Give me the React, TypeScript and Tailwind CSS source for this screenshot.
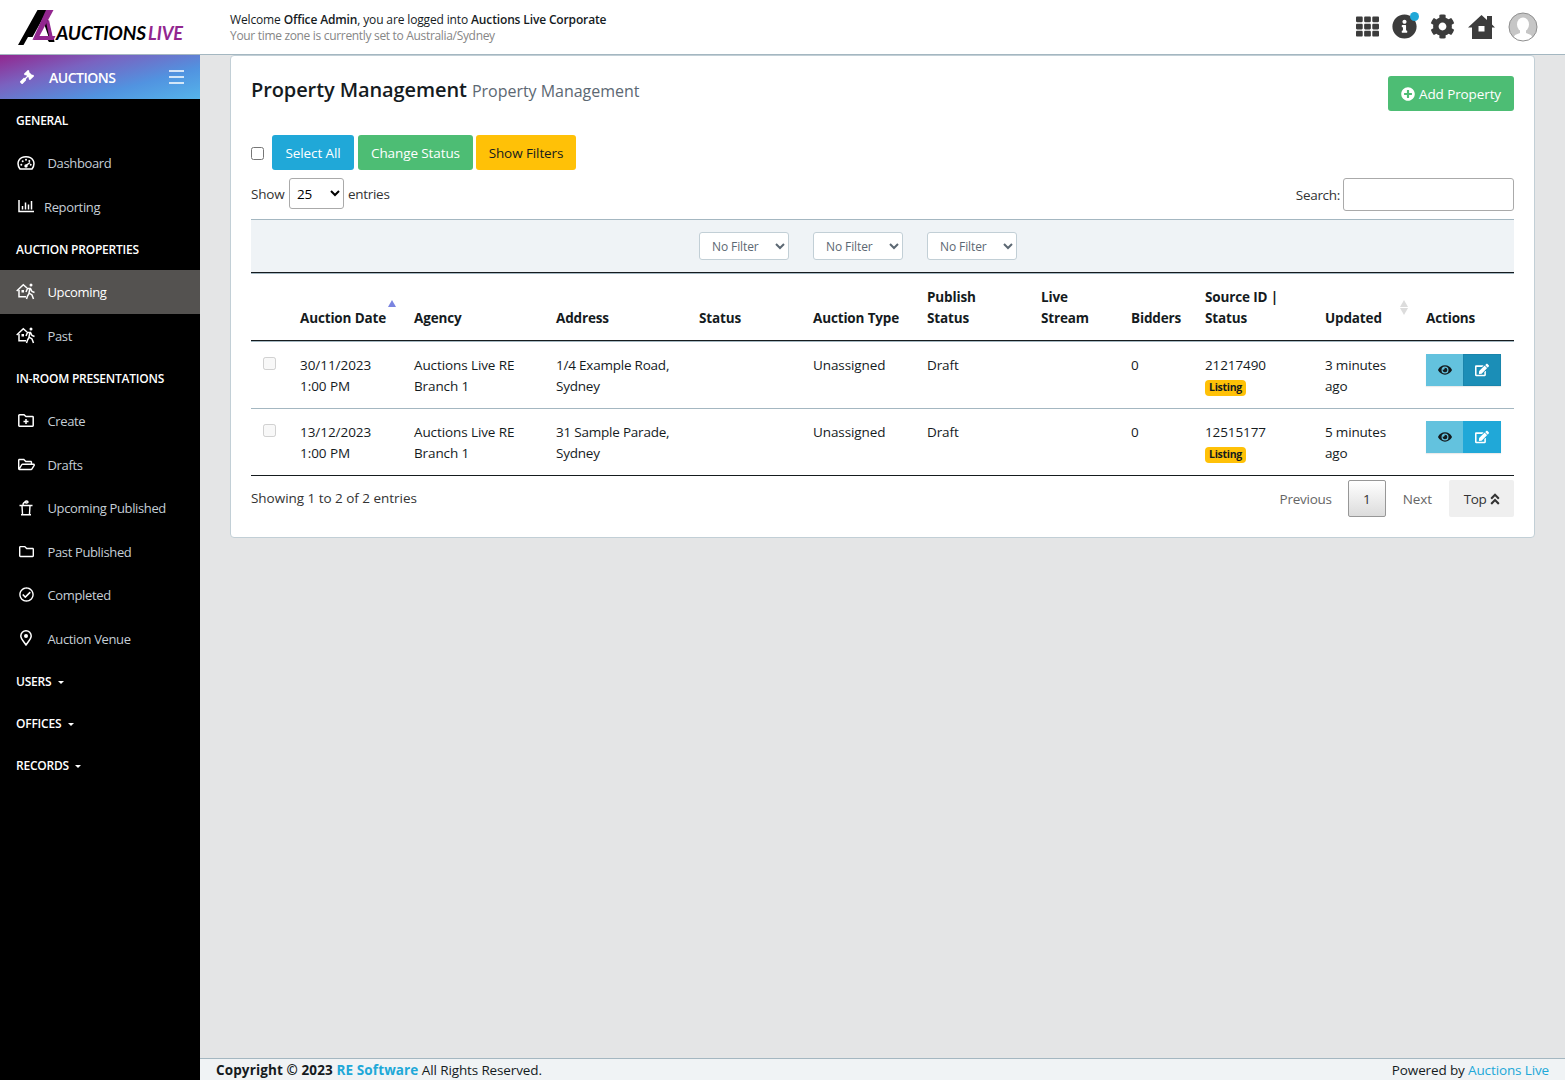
import React from 'react';
import { FaAngleDoubleUp, FaCog, FaEdit, FaEye, FaGavel, FaInfoCircle, FaPlusCircle, FaRegCheckCircle, FaRegFolder, FaRegFolderOpen, FaTh } from 'react-icons/fa';

interface Property {
    date: string;
    time: string;
    address: string;
    sourceId: string;
    updated: string;
    active: boolean;
}

const properties: Property[] = [
    { date: '30/11/2023', time: '1:00 PM', address: '1/4 Example Road,', sourceId: '21217490', updated: '3 minutes', active: true },
    { date: '13/12/2023', time: '1:00 PM', address: '31 Sample Parade,', sourceId: '12515177', updated: '5 minutes', active: false },
];

const columnWidths = [37, 114, 142, 143, 114, 114, 114, 90, 74, 120, 101, 100];

const Logo = () => (
    <svg width="168" height="38" viewBox="0 0 168 38" className="block">
        <path d="M0 37 L19.500 2 H29.500 L14.500 29 H10 L5.500 37 Z" fill="#000" />
        <path d="M29.500 10 L34.500 30 H31 L26.500 17 Z M29 31 H36 L36.500 34 H31 Z" fill="#000" />
        <path d="M28 2 H35.500 L21.500 28 L14.500 32 Z" fill="#92278f" />
        <path d="M20 28 H37.500 L35.500 32 H14.500 Z M28 14 L31 12 L34.500 28 H31 Z" fill="#92278f" />
        <text x="38" y="31.500" fontFamily="Lato" fontStyle="italic" fontWeight="700" fontSize="18" textLength="90" lengthAdjust="spacingAndGlyphs" fill="#000">
            AUCTIONS
        </text>
        <text x="130" y="31.500" fontFamily="Lato" fontStyle="italic" fontWeight="700" fontSize="18" textLength="35" lengthAdjust="spacingAndGlyphs" fill="#92278f">
            LIVE
        </text>
    </svg>
);

const HouseIcon = () => (
    <svg width="27" height="26" viewBox="0 0 27 26" fill="#3c3c3c">
        <path fillRule="evenodd" d="M13.500 1 L19 6 V2 H24 V10.500 L27 13.500 H24 V25 H4 V13.500 H0 Z M10.500 12 V17.500 H16.500 V12 Z" />
    </svg>
);

const MenuIcon = () => (
    <svg width="15" height="14" viewBox="0 0 15 14" stroke="currentColor" strokeWidth="1.600">
        <path d="M0 1 H15 M0 7 H15 M0 13 H15" />
    </svg>
);

const GaugeIcon = () => (
    <svg width="18" height="14" viewBox="0 0 18 14" fill="none" stroke="currentColor" strokeWidth="1.500">
        <path d="M3 13 C-1.500 6.500 2.500 .8 9 .8 C15.500 .8 19.500 6.500 15 13 Z" strokeLinejoin="round" />
        <path d="M8.500 10 L13 6.500" />
        <g fill="currentColor" stroke="none">
            <circle cx="9" cy="10" r="1.700" />
            <circle cx="4.300" cy="8.800" r="1" />
            <circle cx="5.700" cy="5.200" r="1" />
            <circle cx="9" cy="3.700" r="1" />
            <circle cx="12.300" cy="5" r="1" />
            <circle cx="13.700" cy="8.800" r="1" />
        </g>
    </svg>
);

const ChartIcon = () => (
    <svg width="16" height="13" viewBox="0 0 16 13" fill="none" stroke="currentColor" strokeWidth="1.500">
        <path d="M1 0 V11.500 H16" />
        <path d="M4.500 9.500 V6 M7.500 9.500 V2.500 M10.500 9.500 V4.500 M13.500 9.500 V1" />
    </svg>
);

const FolderPlusIcon = () => (
    <svg width="16" height="13" viewBox="0 0 16 13" fill="none" stroke="currentColor" strokeWidth="1.500">
        <path d="M.8 1.500 Q.8 .8 1.500 .8 H6 L8 2.500 H14.500 Q15.200 2.500 15.200 3.200 V11.500 Q15.200 12.200 14.500 12.200 H1.500 Q.8 12.200 .8 11.500 Z" />
        <path d="M8 5 V10 M5.500 7.500 H10.500" />
    </svg>
);

const PinIcon = () => (
    <svg width="12" height="16" viewBox="0 0 12 16" fill="none" stroke="currentColor" strokeWidth="1.500">
        <path d="M6 15 C4.500 12.500 .8 9 .8 6 A5.200 5.200 0 0 1 11.200 6 C11.200 9 7.500 12.500 6 15 Z" strokeLinejoin="round" />
        <circle cx="6" cy="6" r="2" fill="currentColor" stroke="none" />
    </svg>
);

const PropertyIcon = () => (
    <svg width="20" height="17" viewBox="0 0 20 17" fill="none" stroke="currentColor" strokeWidth="1.500">
        <path d="M.7 8 L7.300 1.700 L11 5" />
        <path d="M3 7 V13.700 H10" />
        <rect x="5.500" y="7" width="2.500" height="2.500" fill="currentColor" stroke="none" />
        <circle cx="15" cy="2" r="1.500" fill="currentColor" stroke="none" />
        <path d="M10 9 L11.500 5.500 L14.500 5.500 L16 8.500 L18.500 9.500 M14 5.500 L13 10 L16 12 L17.500 16 M13 10.500 L11.500 13 L10.500 16" />
    </svg>
);

const PodiumIcon = () => (
    <svg width="14" height="16" viewBox="0 0 14 16" fill="none" stroke="currentColor" strokeWidth="1.400">
        <path d="M.5 5.500 H13.500 M3 5.500 L3.500 14 M11 5.500 L10.500 14 M2 14.700 H12 M4 5 C4 2.500 5.500 2 7.500 2" />
        <ellipse cx="7.500" cy="2" rx="1.500" ry="1" />
    </svg>
);

const Avatar = () => (
    <svg width="30" height="30" viewBox="0 0 30 30">
        <defs>
            <clipPath id="avatar-clip">
                <circle cx="15" cy="15" r="14" />
            </clipPath>
        </defs>
        <circle cx="15" cy="15" r="14" fill="#c6c6c6" />
        <g clipPath="url(#avatar-clip)" fill="#fff">
            <ellipse cx="15" cy="12.500" rx="6" ry="7" />
            <path d="M12 17 H18 V21 L23 23 Q25 25 25 30 H5 Q5 25 7 23 L12 21 Z" />
        </g>
        <circle cx="15" cy="15" r="14" fill="none" stroke="#8f8f8f" strokeWidth="1" />
    </svg>
);

const NavTitle = ({ label, caret }: { label: string; caret?: boolean }) => (
    <div className="flex h-[42px] items-center px-4 pt-0.5 text-[12px] font-semibold tracking-[-0.22px] text-white">
        {label}
        {caret && <span className="ml-[6.500px] border-x-[3px] border-t-[3px] border-x-transparent border-t-white" />}
    </div>
);

interface NavItemProps {
    icon: React.ReactNode;
    label: string;
    active?: boolean;
    narrow?: boolean;
}

const NavItem = ({ icon, label, active, narrow }: NavItemProps) => (
    <div className={`flex h-[43.500px] items-center pl-4 text-[13px] tracking-[-0.36px] ${active ? 'bg-[#545250] text-white' : 'text-[#c5ced6]'}`}>
        <span className={`flex w-5 justify-center text-white ${narrow ? 'mr-2' : 'mr-[11.500px]'}`}>{icon}</span>
        <span className="pt-0.5">{label}</span>
    </div>
);

const Sidebar = () => (
    <aside className="w-[200px] shrink-0 bg-black">
        <div className="flex h-11 items-center bg-[linear-gradient(165deg,#92278f_0%,#7a62c0_32%,#5193e0_68%,#55b4ea_100%)] pl-5 pr-4 text-white">
            <FaGavel size={14} />
            <span className="ml-[15px] grow pt-px text-[14px] font-semibold tracking-[-0.5px]">AUCTIONS</span>
            <MenuIcon />
        </div>
        <NavTitle label="GENERAL" />
        <NavItem icon={<GaugeIcon />} label="Dashboard" />
        <NavItem icon={<ChartIcon />} label="Reporting" narrow />
        <NavTitle label="AUCTION PROPERTIES" />
        <NavItem icon={<PropertyIcon />} label="Upcoming" active />
        <NavItem icon={<PropertyIcon />} label="Past" />
        <NavTitle label="IN-ROOM PRESENTATIONS" />
        <NavItem icon={<FolderPlusIcon />} label="Create" />
        <NavItem icon={<FaRegFolderOpen size={17} />} label="Drafts" />
        <NavItem icon={<PodiumIcon />} label="Upcoming Published" />
        <NavItem icon={<FaRegFolder size={15} />} label="Past Published" />
        <NavItem icon={<FaRegCheckCircle size={15} />} label="Completed" />
        <NavItem icon={<PinIcon />} label="Auction Venue" />
        <NavTitle label="USERS" caret />
        <NavTitle label="OFFICES" caret />
        <NavTitle label="RECORDS" caret />
    </aside>
);

const TopBar = () => (
    <header className="flex h-[55px] items-center border-b border-[#a4b7c1] bg-white">
        <div className="w-[230px] pl-[18px]">
            <Logo />
        </div>
        <div className="grow pt-0.5 text-[12px] leading-4 tracking-[-0.14px]">
            <div>
                Welcome <b className="font-semibold">Office Admin</b>, you are logged into <b className="font-semibold">Auctions Live Corporate</b>
            </div>
            <div className="tracking-[-0.32px] text-[#868686]">Your time zone is currently set to Australia/Sydney</div>
        </div>
        <div className="flex items-center pb-px pr-[27.500px] text-[#3c3c3c]">
            <FaTh size={23} className="mr-[13px]" />
            <div className="relative mr-[13px]">
                <FaInfoCircle size={25} />
                <span className="absolute -right-0.5 -top-0.5 h-[9px] w-[9px] rounded-full bg-[#20a8d8]" />
            </div>
            <FaCog size={25} className="mr-[13px]" />
            <span className="mr-[13px]">
                <HouseIcon />
            </span>
            <Avatar />
        </div>
    </header>
);

const FilterSelect = () => (
    <select className="block h-7 w-[90px] rounded-[3px] border border-[#c2cfd6] bg-white pl-2 text-[12px] tracking-[-0.1px] text-[#5c6873]">
        <option>No Filter</option>
    </select>
);

const headers = ['', 'Auction Date', 'Agency', 'Address', 'Status', 'Auction Type', 'Publish Status', 'Live Stream', 'Bidders', 'Source ID | Status', 'Updated', 'Actions'];

const PropertyTable = () => (
    <table className="w-[1263px] table-fixed border-separate border-spacing-0 text-left leading-[21px]">
        <colgroup>
            {columnWidths.map((width, i) => (
                <col key={i} style={{ width }} />
            ))}
        </colgroup>
        <thead>
            <tr>
                {columnWidths.map((_, i) => (
                    <td key={i} className="h-[54px] border-b border-t border-b-[#151b1e] border-t-[#a4b7c1] bg-[#eff3f6] px-3">
                        {i >= 4 && i <= 6 && <FilterSelect />}
                    </td>
                ))}
            </tr>
            <tr>
                {headers.map((header, i) => (
                    <th key={i} className={`relative h-[68px] border-b border-t border-b-[#151b1e] border-t-[#a4b7c1] pb-[11px] pl-3 align-bottom font-bold tracking-[-0.15px] ${header === 'Publish Status' ? 'pr-6' : 'pr-2'}`}>
                        {header}
                        {header === 'Auction Date' && (
                            <span className="absolute right-[6px] top-[26px] border-x-4 border-b-[7px] border-x-transparent border-b-[#7a84e0]" />
                        )}
                        {header === 'Updated' && (
                            <span className="absolute right-[6px] top-[26px] flex flex-col gap-px">
                                <span className="border-x-4 border-b-[7px] border-x-transparent border-b-[#dcdcdc]" />
                                <span className="border-x-4 border-t-[7px] border-x-transparent border-t-[#dcdcdc]" />
                            </span>
                        )}
                    </th>
                ))}
            </tr>
        </thead>
        <tbody className="[&_td]:h-[67px] [&_td]:border-t [&_td]:border-[#a4b7c1] [&_td]:px-3 [&_td]:pt-[13px] [&_td]:align-top [&_tr:last-child_td]:h-[68px] [&_tr:last-child_td]:border-b [&_tr:last-child_td]:border-b-[#151b1e]">
            {properties.map(property => (
                <tr key={property.sourceId}>
                    <td>
                        <input type="checkbox" disabled className="mt-0.5 block h-[13px] w-[13px]" />
                    </td>
                    <td className="tracking-[-0.05px]">
                        {property.date}
                        <br />
                        {property.time}
                    </td>
                    <td>
                        Auctions Live RE
                        <br />
                        Branch 1
                    </td>
                    <td className="whitespace-nowrap tracking-[-0.22px]">
                        {property.address}
                        <br />
                        Sydney
                    </td>
                    <td />
                    <td>Unassigned</td>
                    <td>Draft</td>
                    <td />
                    <td>0</td>
                    <td>
                        {property.sourceId}
                        <span className="mt-1 block h-4 w-[41px] rounded-[4px] bg-[#ffc107] text-center text-[10.500px] font-bold leading-[15px] tracking-[-0.3px]">Listing</span>
                    </td>
                    <td className="tracking-[-0.18px]">
                        {property.updated}
                        <br />
                        ago
                    </td>
                    <td>
                        <div className="-mt-px flex h-8 w-[75px] shadow-[0_1px_1px_rgba(0,0,0,0.08)]">
                            <button className="flex w-[37px] items-center justify-center bg-[#63c2de]">
                                <FaEye size={14} />
                            </button>
                            <button className={`flex w-[38px] items-center justify-center text-white ${property.active ? 'border border-[#1985ac] bg-[#1b8eb7]' : 'bg-[#20a8d8]'}`}>
                                <FaEdit size={14} />
                            </button>
                        </div>
                    </td>
                </tr>
            ))}
        </tbody>
    </table>
);

const App = () => {
    return (
        <div className="flex h-[1080px] w-[1565px] flex-col overflow-hidden bg-[#e4e5e6] font-['Open_Sans','Noto_Sans',sans-serif] text-[13.500px] tracking-[-0.1px] text-[#151b1e]">
            <TopBar />
            <div className="flex min-h-0 grow">
                <Sidebar />
                <div className="flex grow flex-col">
                    <main className="grow px-[30px]">
                        <section className="h-[483px] rounded-[4px] border border-[#c2cfd6] bg-white px-5 pt-5">
                            {/* Title */}
                            <div className="flex items-start justify-between">
                                <h1 className="text-[20px] font-semibold leading-7 tracking-[-0.1px]">
                                    Property Management <small className="text-[16px] font-normal tracking-[-0.02px] text-[#5c6873]">Property Management</small>
                                </h1>
                                <button className="flex h-[35px] w-[126px] items-center justify-center gap-1 rounded-[3px] bg-[#4dbd74] pt-px text-white">
                                    <FaPlusCircle size={14} />
                                    <span className="pt-px">Add Property</span>
                                </button>
                            </div>

                            {/* Bulk actions */}
                            <div className="mt-6 flex items-center">
                                <input type="checkbox" className="mr-2 mt-0.5 h-[13px] w-[13px]" />
                                <button className="mr-1 h-[35px] w-[82px] rounded-[3px] bg-[#20a8d8] pt-0.5 text-white">Select All</button>
                                <button className="mr-[3px] h-[35px] w-[115px] rounded-[3px] bg-[#4dbd74] pt-0.5 text-white">Change Status</button>
                                <button className="h-[35px] w-[100px] rounded-[3px] bg-[#ffc107] pt-0.5">Show Filters</button>
                            </div>

                            {/* Length and search */}
                            <div className="mt-2 flex h-[41px] items-start justify-between text-[#333]">
                                <div className="flex items-center tracking-[-0.2px]">
                                    <span className="w-[34px] pt-0.5">Show</span>
                                    <select className="mx-1 h-[31px] w-[55px] rounded-[3px] border border-[#aaa] bg-white pl-[3px] text-black">
                                        <option>25</option>
                                    </select>
                                    <span className="pt-0.5 tracking-[-0.3px]">entries</span>
                                </div>
                                <label className="flex items-center gap-[3px] tracking-[-0.3px]">
                                    <span className="pt-0.5">Search:</span>
                                    <input className="h-[33px] w-[171px] rounded-[3px] border border-[#aaa] bg-white" />
                                </label>
                            </div>

                            <PropertyTable />

                            {/* Paging */}
                            <div className="mt-1 flex justify-between text-[#333]">
                                <span className="pt-2 tracking-[-0.03px]">Showing 1 to 2 of 2 entries</span>
                                <div className="flex h-[37px] items-center tracking-[-0.25px] text-[#666]">
                                    <span className="mr-[16px] pt-0.5">Previous</span>
                                    <span className="mr-[17px] flex h-[37px] w-[38px] items-center justify-center rounded-[2px] border border-[#979797] bg-linear-to-b from-white to-[#dcdcdc] pt-0.5 text-[#333]">1</span>
                                    <span className="mr-[17px] pt-0.5 tracking-[-0.1px]">Next</span>
                                    <span className="flex h-[37px] w-[65px] items-center justify-center rounded-[2px] bg-[#efefef] pl-[3px] text-[#333]">
                                        <span className="pt-0.5 tracking-[-0.5px]">Top</span>
                                        <FaAngleDoubleUp size={14} className="ml-0.5" />
                                    </span>
                                </div>
                            </div>
                        </section>
                    </main>
                    <footer className="flex h-[22px] items-center justify-between border-t border-[#a4b7c1] bg-[#f0f3f5] px-4 pt-0.5">
                        <span className="tracking-[-0.13px]">
                            <b className="tracking-[0.12px]">
                                Copyright © 2023 <span className="text-[#20a8d8]">RE Software</span>
                            </b>{' '}
                            All Rights Reserved.
                        </span>
                        <span className="tracking-[-0.13px]">
                            Powered by <span className="text-[#20a8d8]">Auctions Live</span>
                        </span>
                    </footer>
                </div>
            </div>
        </div>
    );
};

export default App;
